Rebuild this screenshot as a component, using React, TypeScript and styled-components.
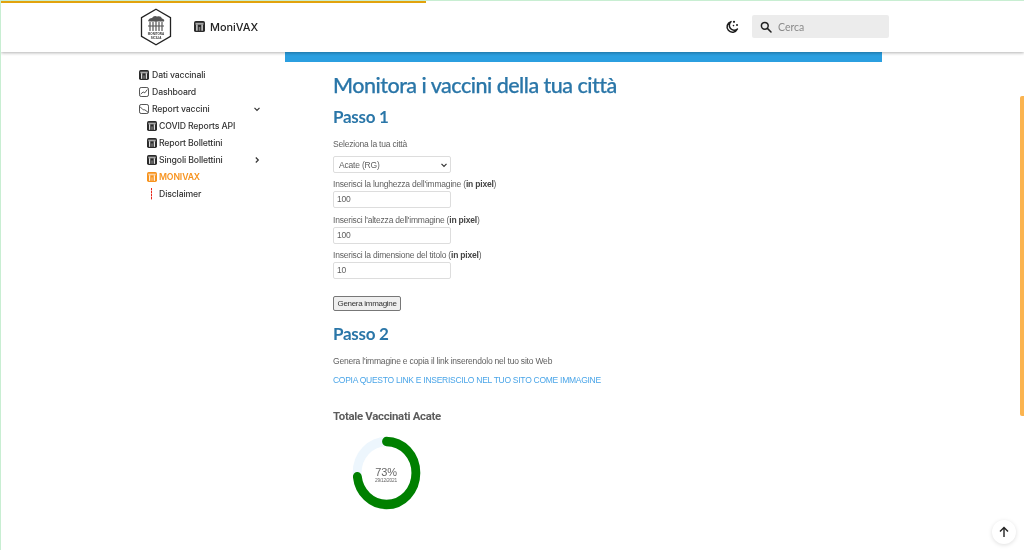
import React from "react";
import styled, { createGlobalStyle } from "styled-components";

const GlobalStyle = createGlobalStyle`
    html, body {
        margin: 0;
        padding: 0;
        background: #fff;
        overflow: hidden;
    }
    * {
        box-sizing: border-box;
    }
`;

function ChartIcon({ color = "#2b2b2b", size = 10 }: { color?: string; size?: number }) {
    return (
        <svg width={size} height={size} viewBox="0 0 12 12" style={{ flex: "none" }}>
            <rect x="0" y="0" width="12" height="12" rx="2" fill={color} />
            <rect x="1.6" y="2" width="8.8" height="2" fill="#fff" opacity="0.6" />
            <rect x="2.4" y="4" width="1.5" height="6.6" fill="#fff" opacity="0.85" />
            <rect x="5.2" y="6.5" width="1.6" height="4.1" fill="#fff" opacity="0.4" />
            <rect x="8.1" y="4" width="1.5" height="6.6" fill="#fff" opacity="0.85" />
        </svg>
    );
}

function LineIcon() {
    return (
        <svg width="10" height="10" viewBox="0 0 12 12" fill="none" stroke="#333" style={{ flex: "none" }}>
            <rect x="0.6" y="0.6" width="10.8" height="10.8" rx="2" />
            <path d="M2 8.5 L5 6 L7 7 L10 3" />
        </svg>
    );
}

function ReportIcon() {
    return (
        <svg width="10" height="10" viewBox="0 0 12 12" fill="none" stroke="#333" style={{ flex: "none" }}>
            <rect x="0.6" y="0.6" width="10.8" height="10.8" rx="2" />
            <path d="M1 3 L5 7 L7 7 L11 10" />
        </svg>
    );
}

function Chevron({ open }: { open?: boolean }) {
    return (
        <svg width="8" height="8" viewBox="0 0 8 8" fill="none" stroke="#333" strokeWidth="1.2">
            <path d={open ? "M1.5 2.8 L4 5.3 L6.5 2.8" : "M2.8 1.5 L5.3 4 L2.8 6.5"} />
        </svg>
    );
}

function Logo() {
    return (
        <svg width="32" height="38" viewBox="0 0 32 38">
            <path d="M16 1.2 L30.5 9.6 V28.4 L16 36.8 L1.5 28.4 V9.6 Z" fill="#fff" stroke="#222" strokeWidth="1.3" />
            <path
                d="M8 13 q1 -3 4 -3 q2 -3 5 -1.5 q4 -1 5 2 q3 1 2 3 H9 Z"
                fill="#555"
            />
            <path
                d="M10 14 V23 M13 14 V23 M16 13 V23 M19 14 V23 M22 14 V23 M8 18 H24"
                stroke="#555"
                strokeWidth="1.2"
                fill="none"
            />
            <text x="16" y="26.5" fontSize="3" textAnchor="middle" fontFamily="Liberation Sans" fontWeight="700" fill="#333">
                MONITORA
            </text>
            <text x="16" y="30.5" fontSize="3" textAnchor="middle" fontFamily="Liberation Sans" fontWeight="700" fill="#333">
                SICILIA
            </text>
        </svg>
    );
}

function MoonIcon() {
    return (
        <svg width="14" height="14" viewBox="0 0 14 14" fill="none">
            <path
                d="M6 1.6 A5.4 5.4 0 1 0 12.4 9 A4.6 4.6 0 0 1 6 1.6 Z"
                stroke="#1d1d1d"
                strokeWidth="1.5"
                strokeLinejoin="round"
            />
            <circle cx="9" cy="1.8" r="1.1" fill="#1d1d1d" />
            <circle cx="12" cy="5" r="1" fill="#1d1d1d" />
            <circle cx="8.5" cy="5.6" r="0.8" fill="#1d1d1d" />
        </svg>
    );
}

function SearchIcon() {
    return (
        <svg width="12" height="12" viewBox="0 0 12 12" fill="none" stroke="#222" strokeWidth="1.5">
            <circle cx="4.8" cy="4.8" r="3.4" />
            <path d="M7.4 7.4 L11 11" strokeLinecap="round" />
        </svg>
    );
}

function Donut({ percent }: { percent: number }) {
    const r = 31.5;
    const circ = 2 * Math.PI * r;
    return (
        <DonutBox>
            <svg width="69" height="74" viewBox="0 0 74 74" preserveAspectRatio="none">
                <circle cx="37" cy="37" r={r} fill="none" stroke="#edf6fd" strokeWidth="9.5" />
                <circle
                    cx="37"
                    cy="37"
                    r={r}
                    fill="none"
                    stroke="#008000"
                    strokeWidth="9.5"
                    strokeLinecap="round"
                    strokeDasharray={`${(circ * percent) / 100} ${circ}`}
                    transform="rotate(-90 37 37)"
                />
            </svg>
            <DonutLabel>
                <DonutValue>{percent}%</DonutValue>
                <DonutDate>29/12/2021</DonutDate>
            </DonutLabel>
        </DonutBox>
    );
}

const sideItems = [
    { label: "Dati vaccinali", icon: <ChartIcon /> },
    { label: "Dashboard", icon: <LineIcon /> },
    { label: "Report vaccini", icon: <ReportIcon />, chevron: <Chevron open /> },
    { label: "COVID Reports API", icon: <ChartIcon />, nested: true },
    { label: "Report Bollettini", icon: <ChartIcon />, nested: true },
    { label: "Singoli Bollettini", icon: <ChartIcon />, nested: true, chevron: <Chevron /> },
    { label: "MONIVAX", icon: <ChartIcon color="#f7931e" />, nested: true, active: true },
];

export default function App() {
    return (
        <Page>
            <GlobalStyle />
            <Progress />
            <Header>
                <Logo />
                <Brand>
                    <ChartIcon size={11} />
                    MoniVAX
                </Brand>
                <HeaderRight>
                    <MoonIcon />
                    <SearchBox>
                        <SearchIcon />
                        <span>Cerca</span>
                    </SearchBox>
                </HeaderRight>
            </Header>
            <Body>
                <Sidebar>
                    {sideItems.map((item) => (
                        <SideRow key={item.label} $nested={item.nested} $active={item.active}>
                            {item.icon}
                            {item.label}
                            {item.chevron && <ChevronSlot>{item.chevron}</ChevronSlot>}
                        </SideRow>
                    ))}
                    <SubRow>
                        <SubMarker />
                        Disclaimer
                    </SubRow>
                </Sidebar>
                <Main>
                    <BlueBar />
                    <Content>
                        <Title>Monitora i vaccini della tua città</Title>
                        <Step>Passo 1</Step>
                        <Text>Seleziona la tua città</Text>
                        <Select>
                            Acate (RG)
                            <Chevron open />
                        </Select>
                        <Field>
                            Inserisci la lunghezza dell'immagine (<b>in pixel</b>)
                        </Field>
                        <Input>100</Input>
                        <Field>
                            Inserisci l'altezza dell'immagine (<b>in pixel</b>)
                        </Field>
                        <Input>100</Input>
                        <Field>
                            Inserisci la dimensione del titolo (<b>in pixel</b>)
                        </Field>
                        <Input>10</Input>
                        <Button>Genera immagine</Button>
                        <StepTwo>Passo 2</StepTwo>
                        <Text>Genera l'immagine e copia il link inserendolo nel tuo sito Web</Text>
                        <LinkText>COPIA QUESTO LINK E INSERISCILO NEL TUO SITO COME IMMAGINE</LinkText>
                        <ChartTitle>Totale Vaccinati Acate</ChartTitle>
                        <Donut percent={73} />
                    </Content>
                </Main>
            </Body>
            <ScrollThumb />
            <TopButton>
                <svg width="12" height="12" viewBox="0 0 12 12" fill="none" stroke="#222" strokeWidth="1.4">
                    <path d="M6 11 V1.5 M2 5.5 L6 1.5 L10 5.5" />
                </svg>
            </TopButton>
        </Page>
    );
}

const Page = styled.div`
    position: relative;
    width: 1024px;
    height: 550px;
    overflow: hidden;
    background: #fff;
    border-top: 1px solid #c8eed2;
    border-left: 1px solid #c8eed2;
    filter: blur(0.35px);
`;

const Progress = styled.div`
    position: absolute;
    top: -1px;
    left: -1px;
    width: 426px;
    height: 3px;
    background: #e2a30d;
    z-index: 3;
`;

const Header = styled.header`
    display: flex;
    align-items: center;
    height: 51px;
    padding: 0 135px 0 139px;
    background: #fff;
    box-shadow: 0 1px 3px rgba(0, 0, 0, 0.3);
    position: relative;
    z-index: 2;
`;

const Brand = styled.div`
    display: flex;
    align-items: center;
    gap: 5px;
    margin-left: 22px;
    font: 500 10.9px "Inter", "Liberation Sans", sans-serif;
    color: #222;
`;

const HeaderRight = styled.div`
    display: flex;
    align-items: center;
    gap: 13px;
    margin-left: auto;
`;

const SearchBox = styled.div`
    display: flex;
    align-items: center;
    gap: 6px;
    width: 137px;
    height: 23px;
    padding-left: 8px;
    background: #ececec;
    border-radius: 2px;
    font: 400 10.5px "Lato", sans-serif;
    color: #8a8a8a;
`;

const Body = styled.div`
    display: flex;
`;

const Sidebar = styled.nav`
    width: 284px;
    flex: none;
    padding: 14px 0 0 138px;
`;

const SideRow = styled.div<{ $nested?: boolean; $active?: boolean }>`
    display: flex;
    align-items: center;
    gap: ${(p) => (p.$nested ? "2px" : "3px")};
    height: 17px;
    width: 122px;
    padding-left: ${(p) => (p.$nested ? "8px" : "0")};
    font: ${(p) => (p.$active ? 600 : 500)} 8.7px "Inter", "Liberation Sans", sans-serif;
    letter-spacing: -0.14px;
    color: ${(p) => (p.$active ? "#f7931e" : "#333")};
`;

const ChevronSlot = styled.span`
    display: flex;
    margin-left: auto;
`;

const SubRow = styled.div`
    display: flex;
    align-items: center;
    gap: 7px;
    height: 17px;
    margin-left: 12px;
    font: 500 8.7px "Inter", "Liberation Sans", sans-serif;
    letter-spacing: -0.14px;
    color: #333;
`;

const SubMarker = styled.span`
    width: 1px;
    height: 12px;
    background: repeating-linear-gradient(#e8281c 0 2px, #f6a9a3 2px 3px);
`;

const Main = styled.main`
    width: 597px;
    flex: none;
`;

const BlueBar = styled.div`
    height: 10px;
    background: #2b9fe0;
`;

const Content = styled.div`
    padding-left: 48px;
    color: #5f5f5f;
    font: 400 8.5px "Liberation Sans", sans-serif;
    letter-spacing: -0.2px;
`;

const Title = styled.h1`
    margin: 10px 0 0;
    font: 500 21.5px/27px "Lato", sans-serif;
    letter-spacing: -0.5px;
    -webkit-text-stroke: 0.25px #2a76a8;
    color: #2a76a8;
`;

const Step = styled.h2`
    margin: 6px 0 0;
    font: 700 17px/24px "Lato", sans-serif;
    letter-spacing: -0.3px;
    color: #2a76a8;
`;

const StepTwo = styled(Step)`
    margin-top: 11px;
`;

const Text = styled.p`
    margin: 9px 0 0;
    line-height: 12px;
`;

const Select = styled.div`
    display: flex;
    align-items: center;
    justify-content: space-between;
    width: 118px;
    height: 17px;
    margin: 6px 0 -0.5px;
    padding: 0 2px 0 5px;
    border: 1px solid #ddd;
    border-radius: 2px;
    background: #fff;
`;

const Field = styled.div`
    margin-top: 5.5px;
    line-height: 12px;
    b {
        color: #444;
    }
`;

const Input = styled.div`
    width: 118px;
    height: 17px;
    margin-top: 1px;
    padding-left: 3px;
    border: 1px solid #ddd;
    border-radius: 2px;
    line-height: 15px;
`;

const Button = styled.div`
    display: inline-block;
    height: 15px;
    margin-top: 17px;
    padding: 0 3.5px;
    background: #efefef;
    border: 1px solid #777;
    border-radius: 2px;
    color: #333;
    font-size: 8px;
    letter-spacing: -0.3px;
    line-height: 13px;
`;

const LinkText = styled.p`
    margin: 7px 0 0;
    line-height: 12px;
    letter-spacing: -0.27px;
    color: #4aa5e8;
`;

const ChartTitle = styled.div`
    margin-top: 23px;
    font: 700 11.4px/14px "Roboto", "Liberation Sans", sans-serif;
    letter-spacing: -0.3px;
    color: #5c5c5c;
`;

const DonutBox = styled.div`
    position: relative;
    width: 69px;
    height: 74px;
    margin: 12.5px 0 0 18.5px;
`;

const DonutLabel = styled.div`
    position: absolute;
    inset: 0;
    padding-top: 6px;
    display: flex;
    flex-direction: column;
    align-items: center;
    justify-content: center;
`;

const DonutValue = styled.div`
    font-size: 11px;
    line-height: 11px;
    color: #666;
`;

const DonutDate = styled.div`
    font-size: 4.8px;
    line-height: 6px;
    color: #666;
`;

const ScrollThumb = styled.div`
    position: absolute;
    top: 95px;
    right: 0;
    width: 4px;
    height: 320px;
    background: #fbb450;
    border-radius: 2px 0 0 2px;
`;

const TopButton = styled.div`
    position: absolute;
    right: 8px;
    bottom: 6px;
    width: 24px;
    height: 24px;
    display: flex;
    align-items: center;
    justify-content: center;
    background: #fff;
    border-radius: 50%;
    box-shadow: 0 1px 4px rgba(0, 0, 0, 0.13);
`;
